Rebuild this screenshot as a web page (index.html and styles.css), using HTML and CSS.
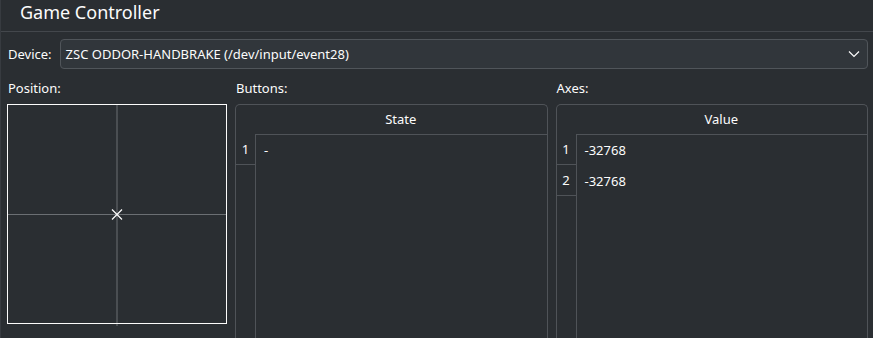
FILE: index.html
```html
<!DOCTYPE html>
<html lang="en">
<head>
  <meta charset="UTF-8">
  <title>Game Controller</title>
  <link rel="stylesheet" href="styles.css">
</head>
<body>
  <header class="titlebar">
    <h1>Game Controller</h1>
  </header>

  <main>
    <!-- device picker -->
    <div class="device-row">
      <label>Device:</label>
      <div class="combo">
        <span>ZSC ODDOR-HANDBRAKE (/dev/input/event28)</span>
        <svg class="chevron" width="12" height="8" viewBox="0 0 12 8">
          <path d="M1 1.5 L6 6.5 L11 1.5" fill="none" stroke="#fcfcfc" stroke-width="1.2"/>
        </svg>
      </div>
    </div>

    <div class="columns">
      <section class="col">
        <div class="caption">Position:</div>
        <svg class="position" width="220" height="222" viewBox="0 0 220 222">
          <line x1="110" y1="0" x2="110" y2="222" stroke="#6b6f73" stroke-width="1"/>
          <line x1="0" y1="110.5" x2="220" y2="110.5" stroke="#6b6f73" stroke-width="1"/>
          <rect x="0.5" y="0.5" width="219" height="219" fill="none" stroke="#fcfcfc" stroke-width="1"/>
          <path d="M105 105.5 L115 115.5 M115 105.5 L105 115.5" stroke="#fcfcfc" stroke-width="1.2"/>
        </svg>
      </section>

      <section class="col">
        <div class="caption">Buttons:</div>
        <div class="table">
          <div class="corner"></div>
          <div class="colhead">State</div>
          <div class="rowheads">
            <div class="rowhead">1</div>
          </div>
          <div class="cells">
            <div class="cell">-</div>
          </div>
        </div>
      </section>

      <section class="col">
        <div class="caption">Axes:</div>
        <div class="table">
          <div class="corner"></div>
          <div class="colhead">Value</div>
          <div class="rowheads">
            <div class="rowhead">1</div>
            <div class="rowhead">2</div>
          </div>
          <div class="cells">
            <div class="cell">-32768</div>
            <div class="cell">-32768</div>
          </div>
        </div>
      </section>
    </div>
  </main>
</body>
</html>
```

FILE: styles.css
```css
html, body {
  margin: 0;
  padding: 0;
}

body {
  font-family: "Noto Sans", "Open Sans", sans-serif;
  font-size: 13px;
  color: #fcfcfc;
  background-color: #2a2e32;
  width: 873px;
  height: 338px;
  overflow: hidden;
  display: flex;
  flex-direction: column;
  border-left: 1px solid #373b40;
  box-sizing: border-box;
}

.titlebar {
  height: 31px;
  border-bottom: 1px solid #43474c;
  box-sizing: content-box;
}

.titlebar h1 {
  margin: 0;
  padding-left: 19px;
  font-size: 18px;
  font-weight: normal;
  line-height: 24px;
}

main {
  flex: 1;
  display: flex;
  flex-direction: column;
  padding: 7px 5px 0 6px;
  min-height: 0;
}

.device-row {
  display: flex;
  align-items: center;
  gap: 8px;
}

.device-row label {
  padding-left: 1px;
}

.combo {
  flex: 1;
  height: 28px;
  display: flex;
  align-items: center;
  justify-content: space-between;
  padding: 0 7px 0 5px;
  background-color: #31363b;
  border: 1px solid #50555a;
  border-radius: 4px;
}

.chevron {
  display: block;
}

.columns {
  flex: 1;
  display: grid;
  grid-template-columns: 220px 1fr 1fr;
  gap: 8px;
  margin-top: 11px;
  min-height: 0;
}

.col {
  display: flex;
  flex-direction: column;
  min-height: 0;
}

.caption {
  line-height: 16px;
  height: 16px;
  margin-bottom: 8px;
  padding-left: 1px;
}

.position {
  display: block;
}

.table {
  flex: 1;
  display: grid;
  grid-template-columns: 19px 1fr;
  grid-template-rows: 29px 1fr;
  border: 1px solid #4f5358;
  border-bottom: none;
  border-radius: 5px 5px 0 0;
  margin-bottom: -10px;
}

.colhead {
  text-align: center;
  line-height: 29px;
}

.rowheads {
  display: flex;
  flex-direction: column;
}

.rowhead {
  height: 30px;
  line-height: 30px;
  text-align: center;
  border-bottom: 1px solid #4f5358;
}

.cells {
  border-left: 1px solid #4f5358;
  border-top: 1px solid #4f5358;
}

.cell {
  height: 31px;
  line-height: 31px;
  padding-left: 8px;
}
```
